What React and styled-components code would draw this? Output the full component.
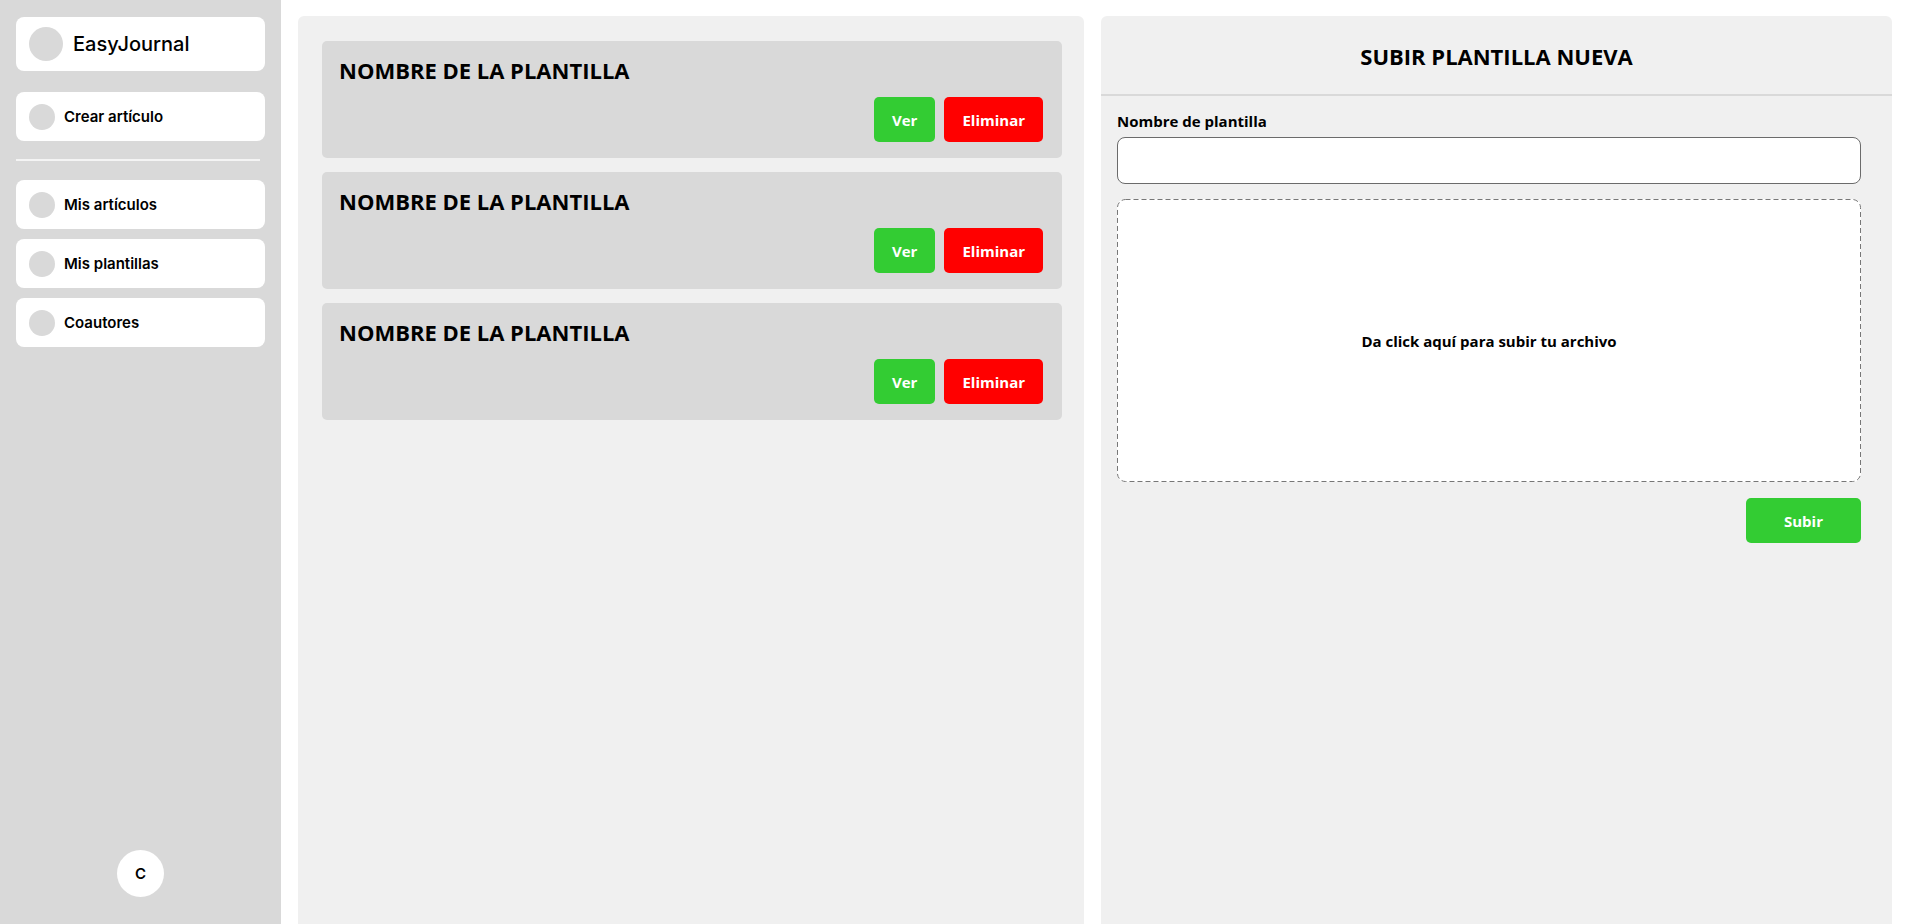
import React from 'react'
import styled, { createGlobalStyle } from 'styled-components'

/* Global */
const GlobalStyle = createGlobalStyle`
  * { box-sizing: border-box; }
  html, body { margin: 0; padding: 0; background: #fff; overflow: hidden; }
  body { font-family: 'Open Sans', 'Noto Sans', sans-serif; color: #000; }
`

/* Layout */
const Layout = styled.div`
  display: flex;
  height: 100vh;
  overflow: hidden;
`

const Sidebar = styled.aside`
  width: 281px;
  flex-shrink: 0;
  background: #d9d9d9;
  display: flex;
  flex-direction: column;
  padding: 17px 16px 27px 16px;
  font-family: 'Inter', 'Liberation Sans', sans-serif;
`

const LogoCard = styled.div`
  height: 54px;
  width: 249px;
  background: #fff;
  border-radius: 8px;
  display: flex;
  align-items: center;
  gap: 10px;
  padding-left: 13px;
  font-size: 20px;
  font-weight: 500;
  margin-bottom: 21px;
`

const Dot = styled.span`
  width: ${(p) => p.$size}px;
  height: ${(p) => p.$size}px;
  border-radius: 50%;
  background: #d9d9d9;
  flex-shrink: 0;
`

const NavItem = styled.div`
  height: 49px;
  width: 249px;
  background: #fff;
  border-radius: 8px;
  display: flex;
  align-items: center;
  gap: 9px;
  padding-left: 13px;
  font-size: 15px;
  font-weight: 600;
  margin-bottom: 10px;
`

const Divider = styled.hr`
  border: none;
  height: 2px;
  width: 244px;
  background: #f4f4f4;
  margin: 8px 0 19px 0;
`

const Avatar = styled.div`
  margin-top: auto;
  align-self: center;
  width: 47px;
  height: 47px;
  border-radius: 50%;
  background: #fff;
  display: flex;
  align-items: center;
  justify-content: center;
  font-size: 15px;
  font-weight: 600;
`

const Content = styled.main`
  flex: 1;
  display: grid;
  grid-template-columns: 786fr 791fr;
  gap: 17px;
  padding: 16px 20px 0 17px;
  min-width: 0;
`

const Panel = styled.section`
  background: #f0f0f0;
  border-radius: 6px 6px 0 0;
  height: calc(100vh - 16px);
  display: flex;
  flex-direction: column;
`

const List = styled.div`
  display: flex;
  flex-direction: column;
  gap: 14px;
  padding: 25px 22px 0 24px;
`

const Card = styled.div`
  background: #d9d9d9;
  border-radius: 5px;
  padding: 15px 19px 16px 17px;
  display: flex;
  flex-direction: column;
`

const CardTitle = styled.h2`
  margin: 0;
  font-size: 22px;
  font-weight: 700;
  line-height: 28px;
`

const Actions = styled.div`
  display: flex;
  justify-content: flex-end;
  gap: 9px;
  margin-top: 13px;
`

const Button = styled.button`
  height: 45px;
  min-width: ${(p) => p.$minWidth || 0}px;
  padding: 0 18px;
  border: none;
  border-radius: 5px;
  background: ${(p) => (p.$danger ? '#ff0000' : '#33cc33')};
  color: #fff;
  font-family: 'Open Sans', 'Noto Sans', sans-serif;
  font-size: 15px;
  font-weight: 700;
  cursor: pointer;
`

const PanelHeader = styled.header`
  height: 80px;
  display: flex;
  align-items: center;
  justify-content: center;
  border-bottom: 2px solid #d9d9d9;
  padding-top: 2px;
`

const HeaderTitle = styled.h1`
  margin: 0;
  font-size: 22px;
  font-weight: 700;
`

const Form = styled.form`
  display: flex;
  flex-direction: column;
  padding: 14px 31px 0 16px;
`

const Label = styled.label`
  font-size: 15px;
  font-weight: 700;
  line-height: 22px;
  margin-bottom: 5px;
`

const Input = styled.input`
  height: 47px;
  border: 1px solid #6b6b6b;
  border-radius: 8px;
  background: #fff;
  padding: 0 12px;
  font-size: 15px;
  outline: none;
`

const DropZone = styled.div`
  position: relative;
  margin-top: 15px;
  height: 283px;
  border-radius: 8px;
  background: #fff;
  display: flex;
  align-items: center;
  justify-content: center;
  font-size: 15px;
  font-weight: 700;
  cursor: pointer;
`

const DashedOutline = styled.svg`
  position: absolute;
  inset: 0;
  width: 100%;
  height: 100%;
  overflow: visible;
  pointer-events: none;
`

const FormFooter = styled.div`
  display: flex;
  justify-content: flex-end;
  margin-top: 16px;
`

const templates = [1, 2, 3]

const App = () => {
  return (
    <>
      <GlobalStyle />
      <Layout>
        <Sidebar>
          <LogoCard>
            <Dot $size={34} />
            EasyJournal
          </LogoCard>
          <NavItem>
            <Dot $size={26} />
            Crear artículo
          </NavItem>
          <Divider />
          <NavItem>
            <Dot $size={26} />
            Mis artículos
          </NavItem>
          <NavItem>
            <Dot $size={26} />
            Mis plantillas
          </NavItem>
          <NavItem>
            <Dot $size={26} />
            Coautores
          </NavItem>
          <Avatar>C</Avatar>
        </Sidebar>

        <Content>
          <Panel>
            <List>
              {templates.map((t) => (
                <Card key={t}>
                  <CardTitle>NOMBRE DE LA PLANTILLA</CardTitle>
                  <Actions>
                    <Button type='button'>Ver</Button>
                    <Button type='button' $danger>
                      Eliminar
                    </Button>
                  </Actions>
                </Card>
              ))}
            </List>
          </Panel>

          <Panel>
            <PanelHeader>
              <HeaderTitle>SUBIR PLANTILLA NUEVA</HeaderTitle>
            </PanelHeader>
            <Form onSubmit={(e) => e.preventDefault()}>
              <Label htmlFor='nombre'>Nombre de plantilla</Label>
              <Input id='nombre' type='text' />
              <DropZone>
                <DashedOutline>
                  <rect
                    x='0.5'
                    y='0.5'
                    width='calc(100% - 1px)'
                    height='calc(100% - 1px)'
                    rx='8'
                    fill='none'
                    stroke='#777'
                    strokeWidth='1'
                    strokeDasharray='5 3'
                  />
                </DashedOutline>
                Da click aquí para subir tu archivo
              </DropZone>
              <FormFooter>
                <Button type='submit' $minWidth={115}>
                  Subir
                </Button>
              </FormFooter>
            </Form>
          </Panel>
        </Content>
      </Layout>
    </>
  )
}

export default App
